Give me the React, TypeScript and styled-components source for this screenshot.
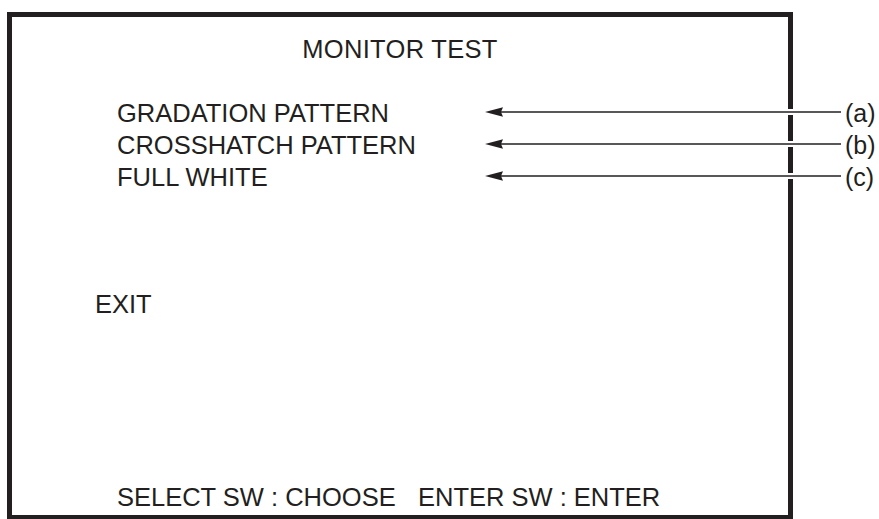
import { createGlobalStyle, styled } from "styled-components";

const GlobalStyle = createGlobalStyle`
  html,
  body {
    margin: 0;
    padding: 0;
    background: #fff;
  }

  body {
    font-family: "Liberation Sans", Arial, Helvetica, sans-serif;
    color: #231f20;
  }
`;

const Page = styled.div`
  width: 879px;
  height: 519px;
  padding: 12px 0 0 7px;
  box-sizing: border-box;
  overflow: hidden;
`;

const Screen = styled.div`
  width: 786px;
  height: 507px;
  box-sizing: border-box;
  border: 5px solid #231f20;
  border-bottom-width: 4px;
  display: flex;
  flex-flow: column nowrap;
  font-size: 25.5px;
  line-height: 32px;
  white-space: nowrap;
`;

const Title = styled.div`
  margin-top: 16px;
  text-align: center;
  letter-spacing: 0.3px;
`;

const Menu = styled.div`
  display: flex;
  flex-flow: column nowrap;
  margin-top: 32px;
`;

const Row = styled.div<{ $indent: number }>`
  display: flex;
  flex-flow: row nowrap;
  align-items: center;
  height: 32px;
  padding-left: ${({ $indent }) => $indent}px;

  & > * {
    flex-shrink: 0;
  }
`;

const Label = styled.span<{ $width?: number }>`
  width: ${({ $width }) => ($width ? `${$width}px` : "auto")};
`;

const Callout = styled.span`
  display: flex;
  flex-flow: row nowrap;
  align-items: center;
  margin-top: -3px;

  svg {
    display: block;
  }
`;

const CalloutTag = styled.span`
  margin-left: 4px;
  font-size: 25px;
  line-height: 26px;
  margin-top: 2px;
`;

const ExitRow = styled(Row)`
  margin-top: 95px;
`;

const Footer = styled(Row)`
  margin-top: auto;
  margin-bottom: 2px;
`;

const ARROW_LENGTH = 356;

const Arrow = () => (
  <svg width={ARROW_LENGTH} height={14} viewBox={`0 0 ${ARROW_LENGTH} 14`}>
    <line x1={18} y1={7} x2={ARROW_LENGTH} y2={7} stroke="#fff" strokeWidth={6} />
    <line x1={12} y1={7} x2={ARROW_LENGTH} y2={7} stroke="#231f20" strokeWidth={1.4} />
    <path d="M0 7 L18 2.2 L16 7 L18 11.8 Z" fill="#231f20" />
  </svg>
);

const items = [
  { label: "GRADATION PATTERN", tag: "(a)" },
  { label: "CROSSHATCH PATTERN", tag: "(b)" },
  { label: "FULL WHITE", tag: "(c)" },
];

export default function App() {
  return (
    <>
      <GlobalStyle />
      <Page>
        <Screen>
          <Title>MONITOR TEST</Title>

          <Menu>
            {items.map((item) => (
              <Row key={item.tag} $indent={105}>
                <Label $width={368}>{item.label}</Label>
                <Callout>
                  <Arrow />
                  <CalloutTag>{item.tag}</CalloutTag>
                </Callout>
              </Row>
            ))}
          </Menu>

          <ExitRow $indent={83}>
            <Label>EXIT</Label>
          </ExitRow>

          <Footer $indent={105}>
            <Label $width={301}>SELECT SW : CHOOSE</Label>
            <Label>ENTER SW : ENTER</Label>
          </Footer>
        </Screen>
      </Page>
    </>
  );
}
